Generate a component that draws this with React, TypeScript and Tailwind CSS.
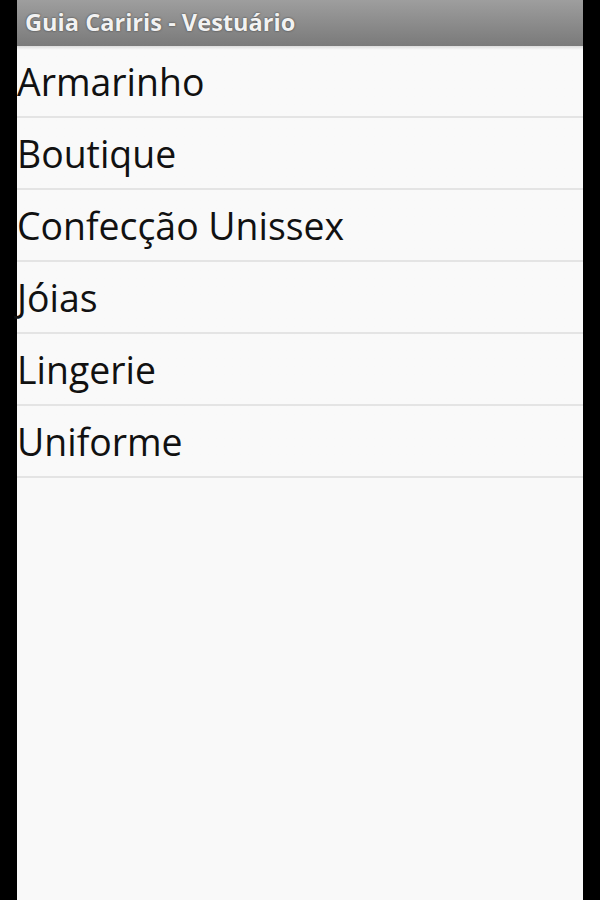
import React from "react";

const items = ["Armarinho", "Boutique", "Confecção Unissex", "Jóias", "Lingerie", "Uniforme"];

export default function App() {
  return (
    <div className="flex h-[900px] w-[600px] bg-black">
      <div className="w-[17px] shrink-0 bg-black" />
      <div className="flex w-[566px] flex-col bg-[#f9f9f9]">
        <div
          className="flex h-[46px] shrink-0 items-center bg-gradient-to-b from-[#9e9e9e] to-[#7a7a7a] pl-[8px] text-[23.6px] font-bold text-[#f2f2f2] [text-shadow:0_0_2px_#333]"
          style={{ fontFamily: '"Open Sans", sans-serif' }}
        >
          <span className="-mt-[1px]">Guia Cariris - Vestuário</span>
        </div>
        <div style={{ fontFamily: '"Open Sans", sans-serif' }} className="bg-gradient-to-b from-[#dcdcdc] to-[#f9f9f9] to-[4px] bg-no-repeat">
          {items.map((it, i) => (
            <div
              key={it}
              className={`flex items-center border-b-2 border-[#e4e4e4] text-[37.4px] text-[#111] ${i === 0 ? "h-[72px]" : "h-[72px]"}`}
            >
              <span className={i === 0 ? "mt-[2px]" : "mt-[2px]"}>{it}</span>
            </div>
          ))}
        </div>
      </div>
      <div className="w-[17px] shrink-0 bg-black" />
    </div>
  );
}
